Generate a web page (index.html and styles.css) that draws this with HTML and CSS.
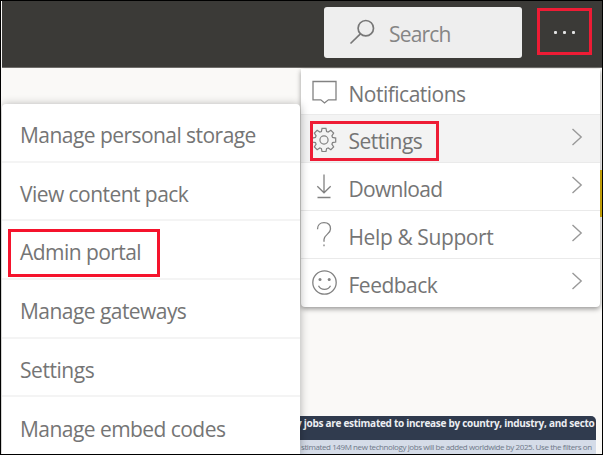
FILE: index.html
```html
<!DOCTYPE html>
<html lang="en">
<head>
<meta charset="utf-8">
<title>Settings menu</title>
<link rel="stylesheet" href="styles.css">
</head>
<body>
<div class="app">
  <header class="topbar">
    <div class="search">
      <svg class="search-icon" width="28" height="28" viewBox="0 0 28 28"><circle cx="16.8" cy="9.2" r="7.7"/><path d="M11.4 14.8 1.5 24.5"/></svg>
      <span class="search-label">Search</span>
    </div>
    <div class="more"><i></i><i></i><i></i></div>
  </header>
  <main class="canvas">
    <span class="accent"></span>
    <section class="report">
      <h1>y jobs are estimated to increase by country, industry, and secto</h1>
      <p>stimated 149M new technology jobs will be added worldwide by 2025. Use the filters on</p>
    </section>
  </main>
  <nav class="menu">
    <div class="item first">
      <svg class="icon" viewBox="0 0 28 28"><path d="M3 3.5h23v18.300h-7.600L14.500 25l-3.700-3.200H3z"/></svg>
      <span class="t-notifications">Notifications</span>
    </div>
    <div class="item active">
      <svg class="icon gear" viewBox="0 0 28 28"><path d="M11.900 2.500h4.200l.7 3.400 1.700.7 2.900-1.900 3 3-1.900 2.900.7 1.700 3.400.7v4.200l-3.400.7-.7 1.700 1.900 2.900-3 3-2.900-1.900-1.700.7-.7 3.400h-4.200l-.7-3.400-1.700-.7-2.900 1.900-3-3 1.900-2.900-.7-1.700-3.400-.7V13l3.400-.7.7-1.700-1.900-2.900 3-3 2.900 1.900 1.700-.7z"/><circle cx="14" cy="15.100" r="4.400"/></svg>
      <span class="t-settings">Settings</span>
      <svg class="chevron" viewBox="0 0 12 20"><path d="m1.500 2 8.700 8-8.700 8"/></svg>
      <b class="mark mark-settings"></b>
    </div>
    <div class="item">
      <svg class="icon" viewBox="0 0 28 28"><path d="M14 1.500v18.300M7.300 13.200l6.700 6.600 6.700-6.600M7.500 24.500h13"/></svg>
      <span class="t-download">Download</span>
      <svg class="chevron" viewBox="0 0 12 20"><path d="m1.500 2 8.700 8-8.700 8"/></svg>
    </div>
    <div class="item">
      <svg class="icon" viewBox="0 0 28 28"><path d="M7.500 8.200c0-4 2.600-6.500 6.500-6.500s6.500 2.400 6.500 6.200c0 5.200-6.500 5.700-6.500 10.600v2.200M14 23.500v1.700"/></svg>
      <span class="t-help">Help &amp; Support</span>
      <svg class="chevron" viewBox="0 0 12 20"><path d="m1.500 2 8.700 8-8.700 8"/></svg>
    </div>
    <div class="item">
      <svg class="icon" viewBox="0 0 28 28"><circle cx="14.500" cy="13.500" r="11.700"/><path d="M8.500 16.800c2.500 4.700 9.500 4.700 12 0"/><circle class="eye" cx="10" cy="10.500" r="1.500"/><circle class="eye" cx="19.200" cy="10.500" r="1.500"/></svg>
      <span class="t-feedback">Feedback</span>
      <svg class="chevron" viewBox="0 0 12 20"><path d="m1.500 2 8.700 8-8.700 8"/></svg>
    </div>
  </nav>
  <nav class="submenu">
    <div class="sub"><span class="t-storage">Manage personal storage</span></div>
    <div class="sub"><span class="t-pack">View content pack</span></div>
    <div class="sub"><span class="t-admin">Admin portal</span><b class="mark mark-admin"></b></div>
    <div class="sub"><span class="t-gateways">Manage gateways</span></div>
    <div class="sub"><span class="t-set">Settings</span></div>
    <div class="sub"><span class="t-embed">Manage embed codes</span></div>
  </nav>
</div>
</body>
</html>
```
FILE: styles.css
```css
* { box-sizing: border-box; }
body { margin: 0; font-family: "Open Sans", "Noto Sans", sans-serif; }
.app {
  position: relative;
  width: 603px;
  height: 455px;
  border: 1px solid #000;
  background: #faf9f7;
  overflow: hidden;
  display: flex;
  flex-direction: column;
}
.topbar {
  flex: none;
  height: 67px;
  margin-left: 1px;
  padding: 6px 10px 0 0;
  background: #3b3a37;
  border-bottom: 1px solid #6f6d6a;
  display: flex;
  justify-content: flex-end;
  align-items: flex-start;
}
.search {
  width: 198px;
  height: 51px;
  margin-right: 15px;
  padding: 12px 0 0 25px;
  border-radius: 3px;
  background: #eee;
  display: flex;
  align-items: flex-start;
}
.search-icon { flex: none; fill: none; stroke: #777; stroke-width: 1.7; }
.search-label {
  margin-left: 12px;
  font-size: 21px;
  line-height: 30px;
  letter-spacing: -0.8px;
  color: #858585;
}
.more {
  width: 55px;
  height: 47px;
  margin-top: 1px;
  border: 3px solid #ee1c35;
  display: flex;
  justify-content: center;
  align-items: center;
  gap: 6px;
}
.more i { width: 3px; height: 3px; margin-top: 1px; border-radius: 1px; background: #e2e2e2; }
.canvas { flex: 1; display: flex; flex-direction: column; }
.accent { width: 3px; height: 47px; margin: 102px 0 0 auto; background: #e0b80c; }
.report {
  height: 38px;
  margin: auto 6px 0 290px;
  border-radius: 5px 5px 0 0;
  background: #d5dce8;
  box-shadow: 0 0 2px #fff;
  overflow: hidden;
  white-space: nowrap;
}
.report h1 {
  margin: 0;
  height: 24px;
  padding-left: 5px;
  background: #303b4e;
  color: #eceef2;
  font-size: 10px;
  line-height: 15px;
  letter-spacing: -0.28px;
}
.report p {
  margin: 0;
  padding-left: 10px;
  color: #6f7988;
  font-size: 8px;
  line-height: 14px;
  letter-spacing: -0.41px;
}
.menu {
  position: absolute;
  left: 300px;
  top: 68px;
  width: 299px;
  height: 238px;
  background: #fff;
  border-radius: 0 0 4px 4px;
  box-shadow: 0 2px 5px rgba(0, 0, 0, .4);
}
.item {
  position: relative;
  height: 48px;
  padding: 0 17px 0 9px;
  border-bottom: 1px solid #eaeaea;
  display: flex;
  align-items: center;
  font-size: 21px;
  color: #757575;
}
.item.first { height: 46px; }
.item:last-child { border-bottom: 0; }
.item.active { background: #f3f3f3; }
.icon { width: 28px; height: 28px; fill: none; stroke: #828282; stroke-width: 1.3; }
.gear { width: 26px; height: 26px; margin: 0 1px; }
.icon .eye { fill: #828282; stroke: none; }
.item span { margin-left: 10.5px; line-height: 30px; padding-top: 4px; white-space: nowrap; }
.chevron { width: 12px; height: 20px; margin: -4px 0 0 auto; fill: none; stroke: #999; stroke-width: 1.4; }
.mark { position: absolute; border: 3px solid #ee1c35; }
.mark-settings { left: 9px; top: 6px; width: 129px; height: 40px; }
.submenu {
  position: absolute;
  left: 1px;
  top: 103px;
  width: 298px;
  height: 350px;
  background: #fff;
  border-radius: 4px 4px 0 0;
  box-shadow: 0 1px 10px rgba(0, 0, 0, .32);
  display: grid;
  grid-auto-rows: 58.7px;
}
.sub {
  position: relative;
  padding: 5px 0 0 18px;
  border-bottom: 2px solid #f4f4f4;
  display: flex;
  align-items: center;
  font-size: 21px;
  line-height: 30px;
  color: #757575;
  white-space: nowrap;
}
.sub:last-child { border-bottom: 0; }
.mark-admin { left: 6px; top: 8px; width: 152px; height: 48px; border-color: #f5132c; }
.t-notifications, .t-feedback, .t-settings { letter-spacing: -0.5px; }
.t-download { letter-spacing: -0.7px; }
.t-help { letter-spacing: -0.4px; }
.t-storage, .t-admin, .t-gateways, .t-pack, .t-embed { letter-spacing: -0.55px; }
.t-set { letter-spacing: -0.45px; }
```
